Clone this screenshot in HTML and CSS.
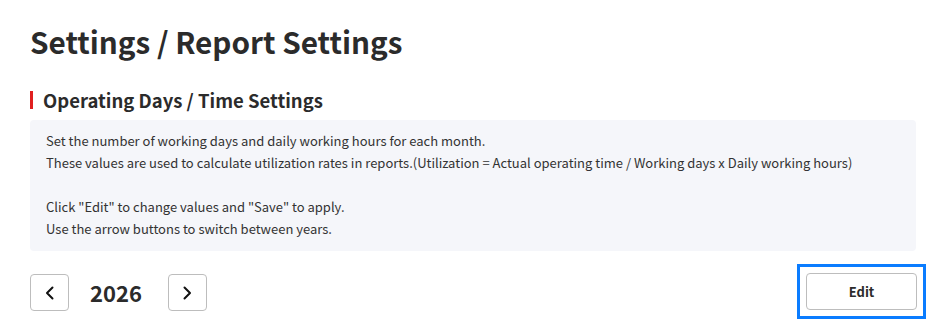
FILE: index.html
```html
<!DOCTYPE html>
<html lang="en">
<head>
<meta charset="utf-8">
<title>Settings / Report Settings</title>
<link rel="stylesheet" href="styles.css">
</head>
<body>
<main class="page">
  <h1 class="page-title">Settings / Report Settings</h1>
  <h2 class="section-title">Operating Days / Time Settings</h2>
  <div class="info-box">
    <p>Set the number of working days and daily working hours for each month.<br>These values are used to calculate utilization rates in reports.(Utilization = Actual operating time / Working days x Daily working hours)</p>
    <p>Click "Edit" to change values and "Save" to apply.<br>Use the arrow buttons to switch between years.</p>
  </div>
  <div class="toolbar">
    <div class="year-nav">
      <button class="arrow-btn" aria-label="Previous year">
        <svg width="12" height="16" viewBox="0 0 12 16"><polyline points="8.5,2.5 3,8 8.5,13.5" fill="none" stroke="#111" stroke-width="2" stroke-linecap="round" stroke-linejoin="round"/></svg>
      </button>
      <span class="year">2026</span>
      <button class="arrow-btn" aria-label="Next year">
        <svg width="12" height="16" viewBox="0 0 12 16"><polyline points="3.5,2.5 9,8 3.5,13.5" fill="none" stroke="#111" stroke-width="2" stroke-linecap="round" stroke-linejoin="round"/></svg>
      </button>
    </div>
    <span class="focus-ring"><button class="edit-btn">Edit</button></span>
  </div>
</main>
</body>
</html>
```
FILE: styles.css
```css
* { box-sizing: border-box; }
html, body { margin: 0; padding: 0; background: #fff; }
body {
  font-family: "Noto Sans CJK JP", "Noto Sans", sans-serif;
  color: #333;
}
.page {
  padding: 19px 29px 0 30px;
}
.page-title {
  margin: 0;
  font-size: 29.7px;
  line-height: 46px;
  font-weight: 700;
  color: #2b2b2b;
}
.section-title {
  margin: 26px 0 0 0;
  font-size: 18.5px;
  line-height: 18px;
  font-weight: 700;
  color: #2b2b2b;
  border-left: 3px solid #e02020;
  padding-left: 10px;
}
.info-box {
  margin-top: 11px;
  background: #f5f6fa;
  border-radius: 4px;
  padding: 10px 16px 11px;
  font-size: 13px;
  line-height: 22px;
  color: #333;
}
.info-box p { margin: 0; }
.info-box p + p { margin-top: 22px; }
.toolbar {
  margin-top: 13px;
  display: flex;
  justify-content: space-between;
  align-items: flex-start;
  margin-right: -10px;
}
.year-nav {
  display: flex;
  align-items: center;
  padding-top: 10px;
}
.arrow-btn {
  width: 39px;
  height: 37px;
  border: 1px solid #bdbdbd;
  border-radius: 4px;
  background: #fff;
  display: flex;
  align-items: center;
  justify-content: center;
  padding: 0;
}
.year {
  margin: 0 26px 0 21px;
  font-size: 22px;
  font-weight: 700;
  color: #2b2b2b;
  line-height: 37px;
}
.focus-ring {
  display: flex;
  border: 3px solid #0a7cff;
  padding: 6px;
}
.edit-btn {
  width: 111px;
  height: 37px;
  border: 1px solid #bdbdbd;
  border-radius: 4px;
  background: #fff;
  font-family: inherit;
  font-size: 13px;
  font-weight: 700;
  color: #2b2b2b;
}
```
